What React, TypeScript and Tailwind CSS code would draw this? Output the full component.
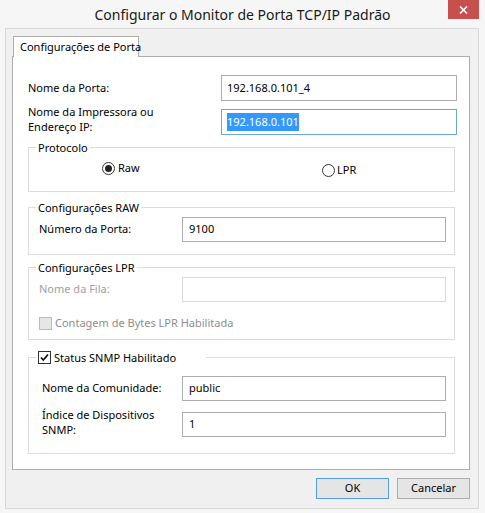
import React from 'react';

function Radio({ checked }: { checked?: boolean }) {
  return (
    <span className="w-[13px] h-[13px] rounded-full border border-[#333] bg-white flex items-center justify-center shrink-0">
      {checked && <span className="w-[7px] h-[7px] rounded-full bg-[#222]" />}
    </span>
  );
}

function Check({ checked, disabled }: { checked?: boolean; disabled?: boolean }) {
  return (
    <span
      className={`w-[13px] h-[13px] border flex items-center justify-center shrink-0 ${
        disabled ? 'border-[#bcbcbc] bg-[#e6e6e6]' : 'border-[#333] bg-white'
      }`}
    >
      {checked && (
        <svg width="11" height="11" viewBox="0 0 11 11">
          <path d="M2 5.5 L4.3 8 L9 2.5" fill="none" stroke="#111" strokeWidth="1.8" />
        </svg>
      )}
    </span>
  );
}

function Field({ value, disabled }: { value?: string; disabled?: boolean }) {
  return (
    <div
      className={`w-[264px] h-[25px] border bg-white px-[6px] flex items-center ${
        disabled ? 'border-[#d9d9d9]' : 'border-[#abadb3]'
      }`}
    >
      {value}
    </div>
  );
}

function GroupBox({
  legend,
  className,
  children,
}: {
  legend: React.ReactNode;
  className: string;
  children?: React.ReactNode;
}) {
  return (
    <div className={`relative w-[427px] border border-[#dcdcdc] ${className}`}>
      <div className="absolute left-[7px] -top-[8px] bg-white px-[2px] leading-[15px] flex items-center">
        {legend}
      </div>
      {children}
    </div>
  );
}

export default function App() {
  return (
    <div className="w-[485px] h-[513px] bg-[#f6f6f6] overflow-hidden font-['Noto_Sans','Open_Sans',sans-serif] text-[11px] text-black">
      {/* Title bar */}
      <div className="relative h-[28px] flex items-center justify-center">
        <span className="text-[14px] text-[#1a1a1a]">Configurar o Monitor de Porta TCP/IP Padrão</span>
        <div className="absolute right-[6px] top-0 w-[31px] h-[19px] bg-[#c7504f] flex items-center justify-center">
          <svg width="9" height="8" viewBox="0 0 9 8">
            <path d="M1 0.5 L8 7.5 M8 0.5 L1 7.5" stroke="#fff" strokeWidth="1.6" />
          </svg>
        </div>
      </div>

      {/* Client area */}
      <div className="ml-[5px] mr-[6px] h-[481px] border border-[#d9d9d9] bg-[#f0f0f0] px-[6px] pt-[7px]">
        <div className="relative z-10 ml-[1px] -mb-[1px] w-[126px] h-[21px] border border-b-0 border-[#adadad] bg-white pl-[6px] flex items-center whitespace-nowrap">
          Configurações de Porta
        </div>

        <div className="w-[458px] h-[414px] border border-[#adadad] bg-white pl-[15px] pt-[18px]">
          {/* Port name */}
          <div className="flex items-center h-[26px]">
            <span className="w-[193px]">Nome da Porta:</span>
            <div className="w-[236px] h-[26px] border border-[#abadb3] px-[5px] flex items-center">
              192.168.0.101_4
            </div>
          </div>

          {/* Printer name or IP */}
          <div className="flex items-start h-[26px] mt-[8px]">
            <span className="w-[193px] -mt-[5px] leading-[15px]">
              Nome da Impressora ou
              <br />
              Endereço IP:
            </span>
            <div className="w-[236px] h-[26px] border border-[#6ea6d8] px-[5px] flex items-center">
              <span className="bg-[#3399ff] text-white h-[18px] leading-[18px]">192.168.0.101</span>
            </div>
          </div>

          {/* Protocol */}
          <GroupBox legend="Protocolo" className="mt-[12px] h-[45px] pt-[14px]">
            <div className="flex items-start pl-[73px]">
              <div className="w-[220px] flex items-center gap-[3px] h-[13px]">
                <Radio checked />
                <span>Raw</span>
              </div>
              <div className="flex items-center gap-[2px] h-[13px] mt-[2px]">
                <Radio />
                <span>LPR</span>
              </div>
            </div>
          </GroupBox>

          {/* RAW */}
          <GroupBox legend="Configurações RAW" className="mt-[15px] h-[48px] pt-[9px]">
            <div className="flex items-center pl-[10px]">
              <span className="w-[143px]">Número da Porta:</span>
              <Field value="9100" />
            </div>
          </GroupBox>

          {/* LPR */}
          <GroupBox legend="Configurações LPR" className="mt-[12px] h-[73px] pt-[9px]">
            <div className="flex items-center pl-[10px]">
              <span className="w-[143px] text-[#a0a0a0]">Nome da Fila:</span>
              <Field disabled />
            </div>
            <div className="flex items-center gap-[3px] pl-[10px] mt-[15px] h-[13px] text-[#8d8d8d]">
              <Check disabled />
              <span>Contagem de Bytes LPR Habilitada</span>
            </div>
          </GroupBox>

          {/* SNMP */}
          <GroupBox
            legend={
              <div className="w-[166px] flex items-center gap-[3px]">
                <Check checked />
                <span>Status SNMP Habilitado</span>
              </div>
            }
            className="mt-[17px] h-[97px] pt-[18px]"
          >
            <div className="flex items-center pl-[13px]">
              <span className="w-[140px]">Nome da Comunidade:</span>
              <Field value="public" />
            </div>
            <div className="flex items-start pl-[13px] mt-[11px]">
              <span className="w-[140px] -mt-[5px] leading-[15px]">
                Índice de Dispositivos
                <br />
                SNMP:
              </span>
              <Field value="1" />
            </div>
          </GroupBox>
        </div>

        {/* Buttons */}
        <div className="w-[458px] flex justify-end gap-[8px] mt-[8px]">
          <button className="w-[73px] h-[21px] border border-[#569de5] bg-[#e5e5e5] text-[11px]">OK</button>
          <button className="w-[73px] h-[21px] border border-[#adadad] bg-[#e5e5e5] text-[11px]">Cancelar</button>
        </div>
      </div>
    </div>
  );
}
